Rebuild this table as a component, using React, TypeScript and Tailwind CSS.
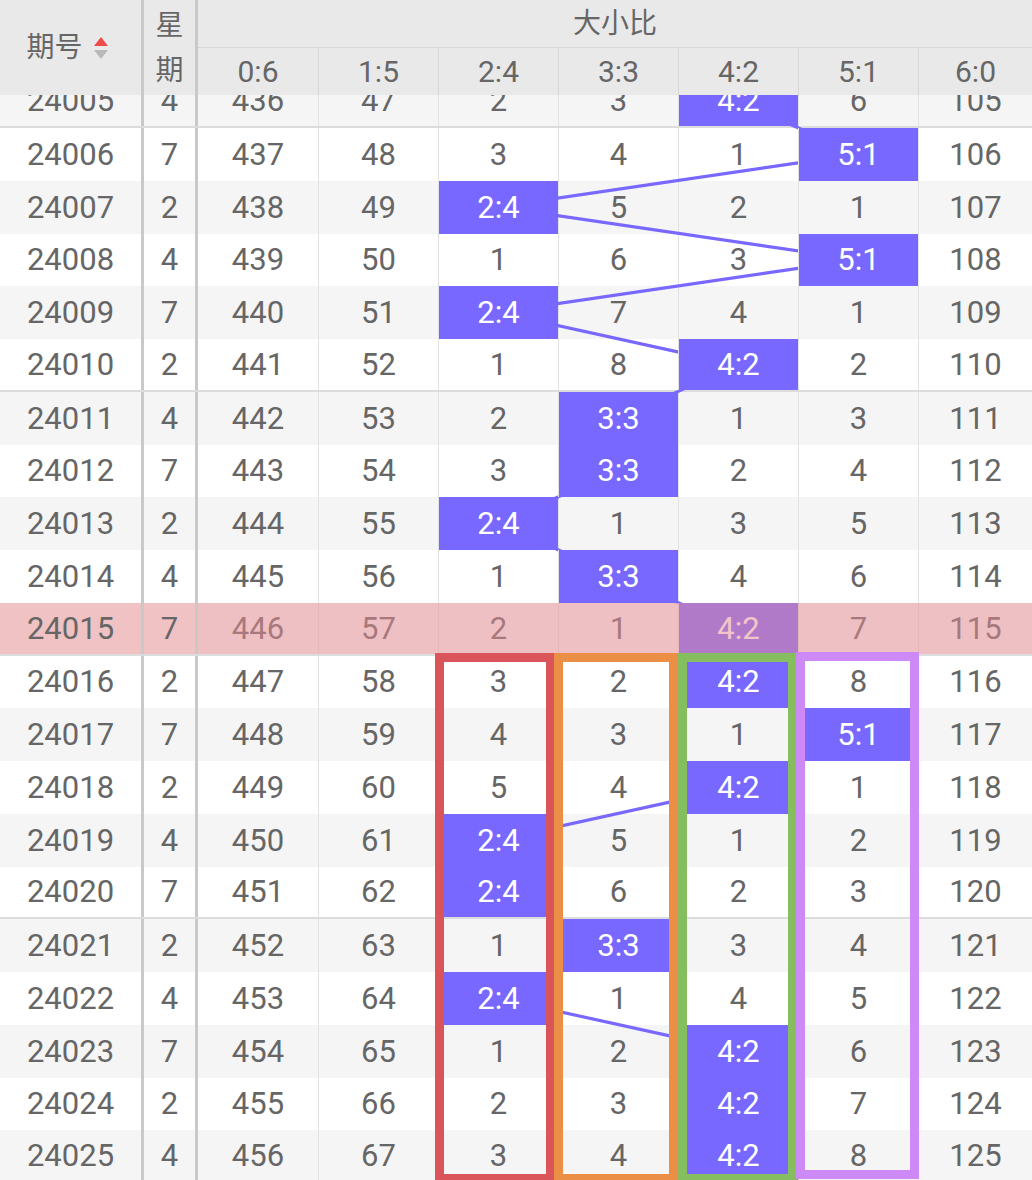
import React from "react";

const LABELS = ["0:6", "1:5", "2:4", "3:3", "4:2", "5:1", "6:0"];

// -1 marks the hit column of the row
const DATA: [number, number, number[]][] = [
  [24005, 4, [436, 47, 2, 3, -1, 6, 105]],
  [24006, 7, [437, 48, 3, 4, 1, -1, 106]],
  [24007, 2, [438, 49, -1, 5, 2, 1, 107]],
  [24008, 4, [439, 50, 1, 6, 3, -1, 108]],
  [24009, 7, [440, 51, -1, 7, 4, 1, 109]],
  [24010, 2, [441, 52, 1, 8, -1, 2, 110]],
  [24011, 4, [442, 53, 2, -1, 1, 3, 111]],
  [24012, 7, [443, 54, 3, -1, 2, 4, 112]],
  [24013, 2, [444, 55, -1, 1, 3, 5, 113]],
  [24014, 4, [445, 56, 1, -1, 4, 6, 114]],
  [24015, 7, [446, 57, 2, 1, -1, 7, 115]],
  [24016, 2, [447, 58, 3, 2, -1, 8, 116]],
  [24017, 7, [448, 59, 4, 3, 1, -1, 117]],
  [24018, 2, [449, 60, 5, 4, -1, 1, 118]],
  [24019, 4, [450, 61, -1, 5, 1, 2, 119]],
  [24020, 7, [451, 62, -1, 6, 2, 3, 120]],
  [24021, 2, [452, 63, 1, -1, 3, 4, 121]],
  [24022, 4, [453, 64, -1, 1, 4, 5, 122]],
  [24023, 7, [454, 65, 1, 2, -1, 6, 123]],
  [24024, 2, [455, 66, 2, 3, -1, 7, 124]],
  [24025, 4, [456, 67, 3, 4, -1, 8, 125]],
];

const ROW_H = 52.75;
const HIGHLIGHT_ROW = 24015;

function SortIcon() {
  return (
    <svg width="16" height="26" viewBox="0 0 16 26">
      <path d="M8 2 L15 11 L1 11 Z" fill="#ee4b4b" />
      <path d="M1 15 L15 15 L8 24 Z" fill="#b9b9b9" />
    </svg>
  );
}

function Header() {
  return (
    <div className="relative z-10 flex h-[95px] bg-[#e9e9e9] text-[#666]">
      <div className="flex w-[141px] items-center justify-center gap-[10px] pl-[2px] pr-[8px]">
        <span className="text-[28px] leading-none">期号</span>
        <SortIcon />
      </div>
      <div className="w-[3px] bg-[#c9c9c9]" />
      <div className="flex w-[51px] flex-col text-[28px] leading-none">
        <div className="flex h-[47px] items-center justify-center pt-[4px]">星</div>
        <div className="flex h-[48px] items-center justify-center">期</div>
      </div>
      <div className="w-[3px] bg-[#c9c9c9]" />
      <div className="flex flex-1 flex-col">
        <div className="flex h-[48px] items-center justify-center border-b-[1.5px] border-[#d7d7d7] text-[28px] leading-none">
          大小比
        </div>
        <div className="flex flex-1">
          {LABELS.map((label, i) => (
            <div
              key={label}
              className={
                i === 0
                  ? "flex w-[120px] items-center justify-center text-[30px] leading-none"
                  : i === 6
                    ? "flex w-[114px] items-center justify-center border-l border-[#d7d7d7] text-[30px] leading-none"
                    : "flex w-[120px] items-center justify-center border-l border-[#d7d7d7] text-[30px] leading-none"
              }
            >
              {label}
            </div>
          ))}
        </div>
      </div>
    </div>
  );
}

function Row({ index, id, week, values }: { index: number; id: number; week: number; values: number[] }) {
  const gray = index % 2 === 0;
  const groupEnd = id % 5 === 0;
  const pink = id === HIGHLIGHT_ROW;

  return (
    <div
      className={[
        "relative flex h-[52.75px]",
        gray ? "bg-[#f5f5f5]" : "bg-white",
        groupEnd ? "border-b-2 border-[#dcdcdc]" : "",
      ].join(" ")}
    >
      <div
        className={
          pink
            ? "flex w-[141px] items-center justify-center bg-[#f0c2c4]"
            : "flex w-[141px] items-center justify-center"
        }
      >
        {id}
      </div>
      <div className="w-[3px] bg-[#c9c9c9]" />
      <div
        className={
          pink
            ? "flex w-[51px] items-center justify-center bg-[#f0c2c4]"
            : "flex w-[51px] items-center justify-center"
        }
      >
        {week}
      </div>
      <div className="w-[3px] bg-[#c9c9c9]" />
      {values.map((v, i) => {
        const hit = v === -1;
        let cls = "flex items-center justify-center";
        cls += i === 6 ? " w-[114px]" : " w-[120px]";
        if (i > 0) cls += " border-l border-[#e2e2e2]";
        if (hit) cls += " relative z-[2] bg-[#7868ff] text-white";
        return (
          <div key={i} className={cls}>
            {hit ? LABELS[i] : v}
          </div>
        );
      })}
      {pink && <div className="absolute bottom-0 left-[198px] right-0 top-0 z-[3] bg-[rgba(234,140,146,0.5)]" />}
    </div>
  );
}

function TrendLine() {
  const points = DATA.map(([, , values], k) => {
    const col = values.indexOf(-1);
    return `${258 + col * 120},${(ROW_H * k + ROW_H / 2).toFixed(2)}`;
  }).join(" ");

  return (
    <svg className="pointer-events-none absolute left-0 top-0 z-[1]" width="1032" height={DATA.length * ROW_H}>
      <polyline points={points} fill="none" stroke="#7868ff" strokeWidth="3.2" strokeLinejoin="round" />
    </svg>
  );
}

export default function App() {
  return (
    <div className="h-[1180px] w-[1032px] overflow-hidden bg-white font-['Roboto','Noto_Sans_CJK_SC',sans-serif] text-[#666]">
      <Header />
      <div className="relative isolate mt-[-19.75px] text-[31px] leading-none">
        {DATA.map(([id, week, values], k) => (
          <Row key={id} index={k} id={id} week={week} values={values} />
        ))}
        <TrendLine />

        <div className="absolute left-[435px] top-[578px] z-[4] h-[530px] w-[120px] border-[9px] border-[#d9555a]" />
        <div className="absolute left-[554px] top-[578px] z-[4] h-[530px] w-[124px] border-[9px] border-[#ec8f46]" />
        <div className="absolute left-[678px] top-[578px] z-[4] h-[530px] w-[119px] border-[9px] border-[#86bd5e]" />
        <div className="absolute left-[796px] top-[577px] z-[4] h-[527px] w-[123px] border-[9px] border-[#cd89f6]" />
      </div>
    </div>
  );
}
